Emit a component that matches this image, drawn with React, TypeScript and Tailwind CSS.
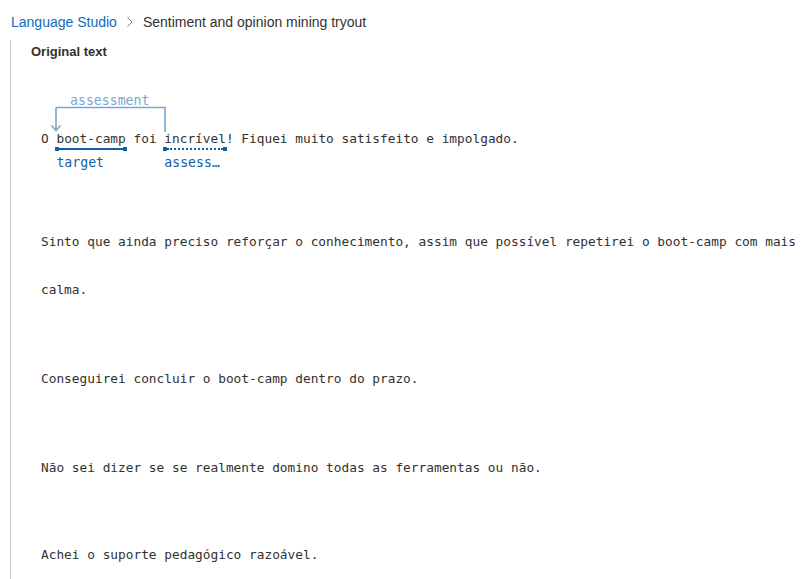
const mono = "font-['Consolas','DejaVu_Sans_Mono',monospace] text-[12.8px] text-[#323130]";

const paragraphs = [
  {
    text: "Sinto que ainda preciso reforçar o conhecimento, assim que possível repetirei o boot-camp com mais calma.",
    margin: "mt-[55px]",
  },
  { text: "Conseguirei concluir o boot-camp dentro do prazo.", margin: "mt-[41px]" },
  { text: "Não sei dizer se se realmente domino todas as ferramentas ou não.", margin: "mt-[41px]" },
  { text: "Achei o suporte pedagógico razoável.", margin: "mt-[39px]" },
];

function AnnotatedLine() {
  return (
    <p className="relative whitespace-pre leading-[48px]">
      {/* relation bracket: incrível -> boot-camp */}
      <svg className="absolute left-0 top-[-20px]" width="200" height="40" fill="none">
        <path d="M15 12.5 H124 V37 M15 12.5 V35" stroke="#7ba7cf" strokeWidth="1.6" />
        <path d="M10.5 30.5 L15 35.5 L19.5 30.5" stroke="#7ba7cf" strokeWidth="1.6" />
      </svg>
      <span className="absolute left-[29px] top-[-22px] text-[13.2px] leading-[16px] text-[#7ba7cf]">assessment</span>
      {"O "}
      <span className="relative inline-block">
        boot-camp
        <span className="absolute left-[-1px] right-[-1px] top-[32px] flex items-center">
          <span className="h-[4px] w-[4px] bg-[#115ea3]" />
          <span className="h-[2px] flex-1 bg-[#115ea3]" />
          <span className="h-[4px] w-[4px] bg-[#115ea3]" />
        </span>
        <span className="absolute left-0 top-[40px] text-[13.2px] leading-[16px] text-[#115ea3]">target</span>
      </span>
      {" foi "}
      <span className="relative inline-block">
        incrível
        <span className="absolute left-[-1px] right-[-1px] top-[32px] flex items-center">
          <span className="h-[4px] w-[4px] bg-[#115ea3]" />
          <span className="flex-1 border-t-2 border-dotted border-[#115ea3]" />
          <span className="h-[4px] w-[4px] bg-[#115ea3]" />
        </span>
        <span className="absolute left-0 top-[40px] text-[13.2px] leading-[16px] text-[#115ea3]">assess…</span>
      </span>
      {"! Fiquei muito satisfeito e impolgado."}
    </p>
  );
}

export default function App() {
  return (
    <div className="h-[579px] w-[803px] overflow-hidden bg-white font-['Segoe_UI','Liberation_Sans',sans-serif]">
      <nav className="flex items-center pl-[11px] pt-[12px] text-[14px] leading-[20px]">
        <span className="text-[#0f6cbd]">Language Studio</span>
        <svg className="mx-[10px]" width="6" height="10" viewBox="0 0 6 10" fill="none">
          <path d="M0.5 0.5 L5 5 L0.5 9.5" stroke="#7a7876" strokeWidth="1" />
        </svg>
        <span className="text-[#323130]">Sentiment and opinion mining tryout</span>
      </nav>

      <section className="ml-[10px] mt-[8px] h-[560px] border-l border-[#c8c6c4]">
        <h2 className="pl-[20px] pt-[3px] text-[13px] font-semibold leading-[18px] text-[#323130]">Original text</h2>
        <div className={`${mono} pl-[30px] pt-[54px]`}>
          <AnnotatedLine />
          {paragraphs.map((p) => (
            <p key={p.text} className={`${p.margin} leading-[48px]`}>
              {p.text}
            </p>
          ))}
        </div>
      </section>
    </div>
  );
}
